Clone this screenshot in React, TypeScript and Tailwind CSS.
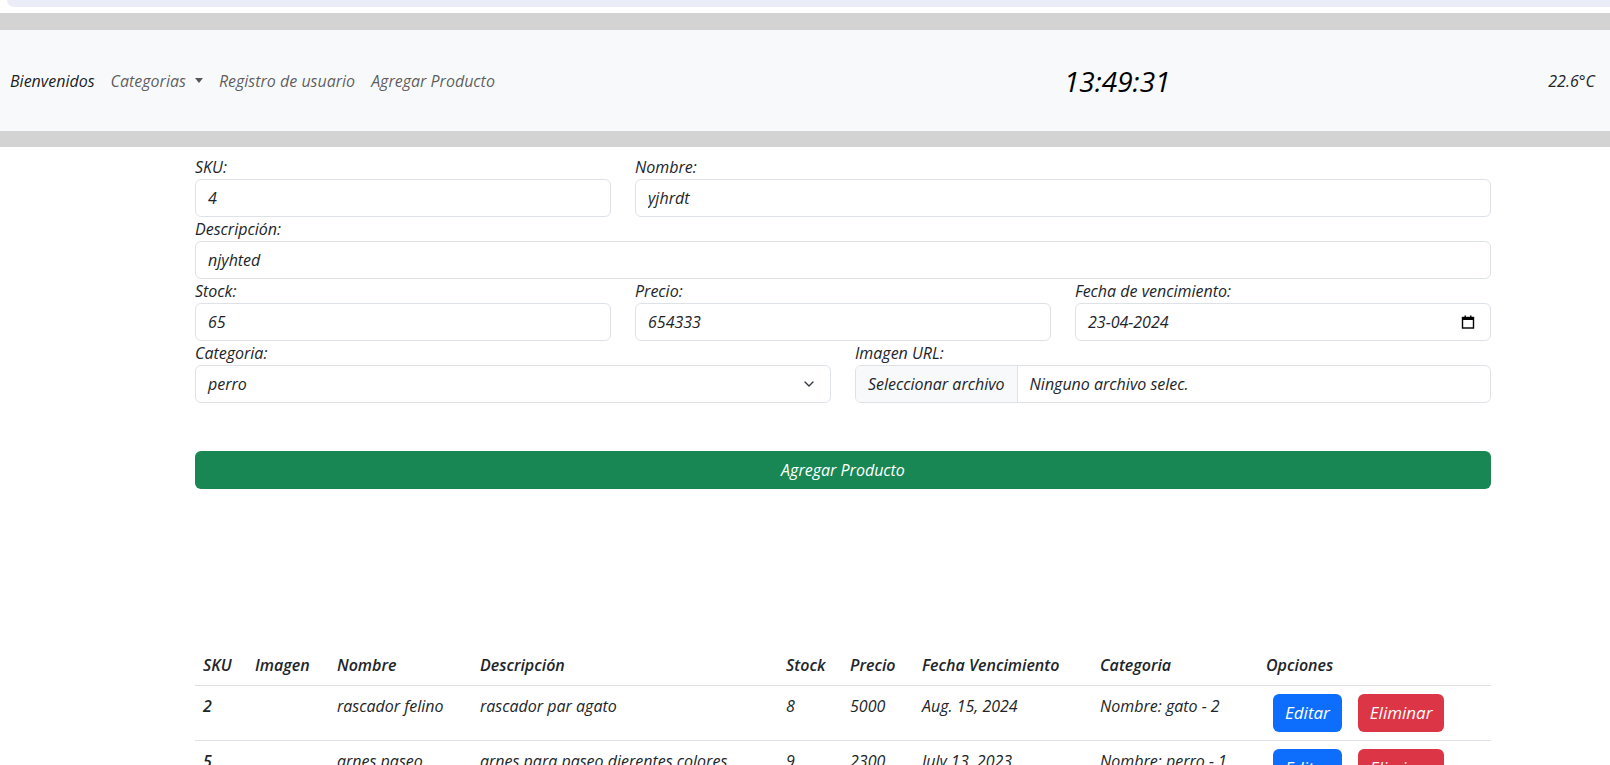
import { ChevronDown } from 'lucide-react'

const products = [
  { sku: '2', nombre: 'rascador felino', desc: 'rascador par agato', stock: '8', precio: '5000', fecha: 'Aug. 15, 2024', cat: 'Nombre: gato - 2' },
  { sku: '5', nombre: 'arnes paseo', desc: 'arnes para paseo dierentes colores', stock: '9', precio: '2300', fecha: 'July 13, 2023', cat: 'Nombre: perro - 1' },
]

function Field({ label, value, className = '' }: { label: string; value: string; className?: string }) {
  return (
    <div className={className}>
      <label className="block leading-6">{label}</label>
      <input
        readOnly
        value={value}
        className="block w-full h-[38px] px-3 border border-[#dee2e6] rounded-md bg-white text-[#212529] outline-none"
      />
    </div>
  )
}

function CalendarIcon() {
  return (
    <svg width="14" height="14" viewBox="0 0 14 14" className="shrink-0">
      <rect x="1.5" y="2.5" width="11" height="10.5" fill="none" stroke="#000" strokeWidth="1.4" />
      <rect x="1.5" y="2.5" width="11" height="2.5" fill="#000" />
      <rect x="3.5" y="0.5" width="1.4" height="3" fill="#000" />
      <rect x="9.1" y="0.5" width="1.4" height="3" fill="#000" />
    </svg>
  )
}

export default function App() {
  return (
    <div className="min-h-screen bg-white text-[#212529] italic text-base font-['Open_Sans',sans-serif]">
      {/* browser strip */}
      <div className="h-[13px] bg-white">
        <div className="ml-[7px] h-[7px] bg-[#eaedf7] rounded-bl-[12px]" />
      </div>
      <div className="h-[17px] bg-[#d3d3d3]" />

      {/* Navbar */}
      <nav className="h-[101px] bg-[#f8f9fa] flex items-center pl-[10px] pr-[15px]">
        <div className="flex items-center gap-4 leading-6">
          <span className="text-black/90">Bienvenidos</span>
          <span className="flex items-center text-black/[.65]">
            Categorias
            <span className="ml-[9px] border-x-[4.5px] border-x-transparent border-t-[5px] border-t-black/[.65]" />
          </span>
          <span className="text-black/[.65]">Registro de usuario</span>
          <span className="text-black/[.65]">Agregar Producto</span>
        </div>
        <div className="ml-[569px] text-[28px] leading-8 text-black">13:49:31</div>
        <div className="ml-auto text-base text-[#212529]">22.6°C</div>
      </nav>
      <div className="h-[16px] bg-[#d3d3d3]" />

      {/* Form */}
      <div className="ml-[195px] w-[1296px] pt-[8px]">
        <div className="grid grid-cols-3 gap-x-6">
          <Field label="SKU:" value="4" />
          <Field label="Nombre:" value="yjhrdt" className="col-span-2" />
          <Field label="Descripción:" value="njyhted" className="col-span-3" />
          <Field label="Stock:" value="65" />
          <Field label="Precio:" value="654333" />
          <div>
            <label className="block leading-6">Fecha de vencimiento:</label>
            <div className="flex items-center justify-between h-[38px] px-3 pr-[15px] border border-[#dee2e6] rounded-md">
              <span>23-04-2024</span>
              <CalendarIcon />
            </div>
          </div>
        </div>
        <div className="grid grid-cols-2 gap-x-6">
          <div>
            <label className="block leading-6">Categoria:</label>
            <div className="flex items-center justify-between h-[38px] pl-3 pr-[13px] border border-[#dee2e6] rounded-md">
              <span>perro</span>
              <ChevronDown size={16} strokeWidth={2} className="text-[#343a40]" />
            </div>
          </div>
          <div>
            <label className="block leading-6">Imagen URL:</label>
            <div className="flex items-center h-[38px] border border-[#dee2e6] rounded-md overflow-hidden">
              <span className="h-full flex items-center px-3 bg-[#f8f9fa] border-r border-[#dee2e6]">Seleccionar archivo</span>
              <span className="px-3">Ninguno archivo selec.</span>
            </div>
          </div>
        </div>

        <button className="mt-[48px] w-full h-[38px] rounded-md bg-[#198754] text-white">
          Agregar Producto
        </button>

        {/* Table */}
        <table className="mt-[156px] w-full table-fixed border-collapse">
          <colgroup>
            <col className="w-[52px]" />
            <col className="w-[82px]" />
            <col className="w-[143px]" />
            <col className="w-[306px]" />
            <col className="w-[64px]" />
            <col className="w-[72px]" />
            <col className="w-[178px]" />
            <col className="w-[166px]" />
            <col className="w-[233px]" />
          </colgroup>
          <thead>
            <tr className="border-b border-[#dee2e6] text-left">
              {['SKU', 'Imagen', 'Nombre', 'Descripción', 'Stock', 'Precio', 'Fecha Vencimiento', 'Categoria', 'Opciones'].map(h => (
                <th key={h} className="p-2 leading-6 font-semibold">{h}</th>
              ))}
            </tr>
          </thead>
          <tbody>
            {products.map(p => (
              <tr key={p.sku} className="border-b border-[#dee2e6] align-top">
                <td className="p-2 leading-6 font-semibold">{p.sku}</td>
                <td className="p-2 leading-6"></td>
                <td className="p-2 leading-6 whitespace-nowrap">{p.nombre}</td>
                <td className="p-2 leading-6 whitespace-nowrap">{p.desc}</td>
                <td className="p-2 leading-6">{p.stock}</td>
                <td className="p-2 leading-6">{p.precio}</td>
                <td className="p-2 leading-6">{p.fecha}</td>
                <td className="p-2 leading-6 whitespace-nowrap">{p.cat}</td>
                <td className="py-2 px-0 whitespace-nowrap">
                  <button className="ml-[15px] h-[38px] px-3 rounded-md bg-[#0d6efd] text-white text-[17px]">Editar</button>
                  <button className="ml-[16px] h-[38px] px-3 rounded-md bg-[#dc3545] text-white text-[17px]">Eliminar</button>
                </td>
              </tr>
            ))}
          </tbody>
        </table>
      </div>
    </div>
  )
}
